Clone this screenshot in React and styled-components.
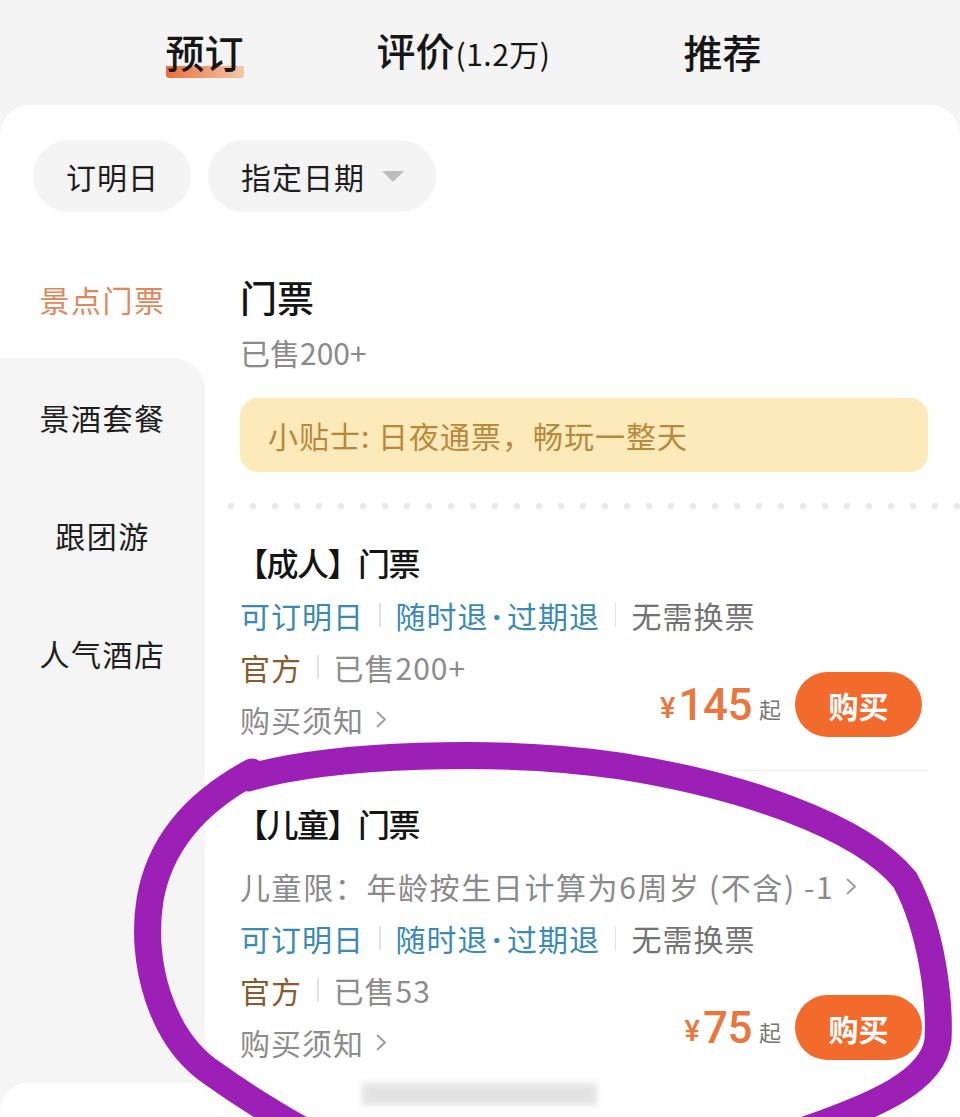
import React from 'react';
import styled, { createGlobalStyle } from 'styled-components';

const GlobalStyle = createGlobalStyle`
  body {
    margin: 0;
    background: #f4f4f4;
    font-family: "Noto Sans CJK SC", "Noto Sans", sans-serif;
    color: #1c1c1c;
  }
`;

const tickets = [
  {
    name: '【成人】门票',
    sold: '已售200+',
    price: '145',
  },
  {
    name: '【儿童】门票',
    desc: '儿童限：年龄按生日计算为6周岁 (不含) -1',
    sold: '已售53',
    price: '75',
  },
];

// thin ">" used after links
function Chevron() {
  return (
    <ChevronSvg viewBox="0 0 11 17" width="11" height="17">
      <polyline points="1.5,1.5 9,8.5 1.5,15.5" />
    </ChevronSvg>
  );
}

function App() {
  return (
    <Screen>
      <GlobalStyle />
      <TabBar>
        <Tab $active>预订</Tab>
        <Tab>评价<small>(1.2万)</small></Tab>
        <Tab>推荐</Tab>
      </TabBar>

      <Card>
        <Chips>
          <Chip>订明日</Chip>
          <Chip>指定日期<Caret /></Chip>
        </Chips>

        <Body>
          <Sidebar>
            <SideItem $active>景点门票</SideItem>
            <SideItem $first>景酒套餐</SideItem>
            <SideItem>跟团游</SideItem>
            <SideItem>人气酒店</SideItem>
            <SideFill />
          </Sidebar>

          <Content>
            <SectionTitle>门票</SectionTitle>
            <SectionSold>已售200+</SectionSold>
            <Tip>小贴士: 日夜通票，畅玩一整天</Tip>
            <Dots />

            {tickets.map((t, i) => (
              <Ticket key={t.name} $last={i === tickets.length - 1}>
                <TicketName>{t.name}</TicketName>
                {t.desc && (
                  <Desc>
                    {t.desc}
                    <Chevron />
                  </Desc>
                )}
                <Row>
                  <Tag $tone="blue">可订明日</Tag>
                  <Sep />
                  <Tag $tone="blue">随时退<Dot>·</Dot>过期退</Tag>
                  <Sep />
                  <Tag>无需换票</Tag>
                </Row>
                <Bottom>
                  <div>
                    <Row>
                      <Tag $tone="brown">官方</Tag>
                      <Sep />
                      <Tag $tone="light">{t.sold}</Tag>
                    </Row>
                    <Row>
                      <Tag $tone="light">购买须知</Tag>
                      <Chevron />
                    </Row>
                  </div>
                  <Price>
                    <Yen>¥</Yen>
                    <Amount>{t.price}</Amount>
                    <From>起</From>
                    <BuyButton>购买</BuyButton>
                  </Price>
                </Bottom>
              </Ticket>
            ))}
          </Content>
        </Body>

        <FooterWrap>
          <Footer>
            <Blur />
          </Footer>
        </FooterWrap>
      </Card>

      {/* hand drawn marker circle over the child ticket */}
      <Marker viewBox="0 0 960 1117" width="960" height="1117">
        <path
          d="M 248 778 C 330 754, 500 748, 620 766 C 740 785, 860 825, 905 880 C 932 930, 940 1000, 938 1040 C 933 1080, 880 1105, 790 1135"
        />
        <path
          d="M 252 772 C 200 800, 160 840, 150 900 C 140 960, 160 1040, 215 1075 C 250 1100, 280 1118, 320 1140"
        />
      </Marker>
    </Screen>
  );
}

export default App;

const Screen = styled.div`
  position: relative;
  width: 960px;
  height: 1117px;
  overflow: hidden;
  background: #f4f4f4;
`;

const TabBar = styled.div`
  display: flex;
  justify-content: center;
  align-items: center;
  gap: 133px;
  height: 105px;
  padding-right: 33px;
  box-sizing: border-box;
`;

const Tab = styled.div`
  font-size: 39px;
  font-weight: 500;
  line-height: 46px;
  color: #161616;
  padding-bottom: 4px;
  background: ${p => p.$active
    ? 'linear-gradient(90deg, #e8713a, #f6c7ab) no-repeat'
    : 'none'};
  background-size: 100% 12px;
  background-position: 0 100%;
  border-radius: 3px;

  small {
    font-size: 30px;
    font-weight: 400;
    letter-spacing: 0.5px;
    margin-left: 1px;
  }
`;

const Card = styled.div`
  background: #fff;
  border-radius: 30px 30px 0 0;
`;

const Chips = styled.div`
  display: flex;
  gap: 17px;
  padding: 35px 0 0 33px;
`;

const Chip = styled.div`
  display: inline-flex;
  align-items: center;
  height: 72px;
  padding: 0 32px 0 33px;
  border-radius: 36px;
  background: #f4f4f4;
  font-size: 30px;
  letter-spacing: 1px;
  color: #1e1e1e;
`;

const Caret = styled.span`
  width: 0;
  height: 0;
  margin-left: 17px;
  border-left: 11px solid transparent;
  border-right: 11px solid transparent;
  border-top: 11px solid #bdbdbd;
`;

const Body = styled.div`
  display: flex;
  margin-top: 28px;
`;

const Sidebar = styled.div`
  width: 205px;
  display: flex;
  flex-direction: column;
`;

const SideItem = styled.div`
  height: 118px;
  display: flex;
  align-items: center;
  justify-content: center;
  font-size: 30px;
  letter-spacing: 1.5px;
  color: ${p => (p.$active ? '#e0875c' : '#1e1e1e')};
  background: ${p => (p.$active ? '#fff' : '#f5f5f5')};
  border-top-right-radius: ${p => (p.$first ? '32px' : '0')};
`;

const SideFill = styled.div`
  flex: 1;
  background: #f5f5f5;
`;

const Content = styled.div`
  flex: 1;
  padding: 30px 32px 0 35px;
`;

const SectionTitle = styled.div`
  font-size: 37px;
  font-weight: 500;
  line-height: 54px;
  color: #141414;
`;

const SectionSold = styled.div`
  font-size: 30px;
  line-height: 56px;
  color: #8a8a8a;
`;

const Tip = styled.div`
  margin-top: 18px;
  height: 74px;
  display: flex;
  align-items: center;
  padding-left: 28px;
  border-radius: 18px;
  background: #fdeabb;
  color: #b8893b;
  font-size: 30px;
  letter-spacing: 1px;
`;

const Dots = styled.div`
  height: 8px;
  margin: 30px -32px 0 -20px;
  background-image: radial-gradient(circle, #e9e9e9 3px, transparent 3.5px);
  background-size: 22px 8px;
  background-repeat: repeat-x;
`;

const Ticket = styled.div`
  padding: 25px 0 ${p => (p.$last ? '15px' : '25px')};
  border-bottom: ${p => (p.$last ? 'none' : '1px solid #efefef')};
`;

const TicketName = styled.div`
  font-size: 32px;
  font-weight: 500;
  line-height: 54px;
  letter-spacing: -1.5px;
  margin-left: -4px;
  color: #141414;
`;

const ChevronSvg = styled.svg`
  margin-left: 12px;
  flex-shrink: 0;

  polyline {
    fill: none;
    stroke: #9a9a9a;
    stroke-width: 1.8;
    stroke-linecap: round;
    stroke-linejoin: round;
  }
`;

const Desc = styled.div`
  display: flex;
  align-items: center;
  margin-top: 10px;
  height: 52px;
  font-size: 30px;
  letter-spacing: 1.6px;
  color: #8a8a8a;
  white-space: nowrap;
`;

const Row = styled.div`
  display: flex;
  align-items: center;
  height: 52px;
  white-space: nowrap;
`;

const toneColor = {
  blue: '#3a8ab6',
  brown: '#8a5a2f',
  light: '#8c8c8c',
};

const Tag = styled.span`
  font-size: 30px;
  letter-spacing: 1px;
  color: ${p => toneColor[p.$tone] || '#737373'};
`;

const Dot = styled.span`
  font-family: "Noto Sans", Roboto, sans-serif;
  font-weight: 700;
  margin: 0 5px 0 4px;
`;

const Sep = styled.span`
  width: 1.5px;
  height: 24px;
  margin: 0 15px;
  background: #e3e3e3;
`;

const Bottom = styled.div`
  display: flex;
  justify-content: space-between;
  align-items: flex-end;
`;

const Price = styled.div`
  display: flex;
  align-items: center;
  margin: 0 6px 8px 0;
`;

const Yen = styled.span`
  font-family: Roboto, "Liberation Sans", sans-serif;
  font-size: 29px;
  font-weight: 500;
  color: #e8773f;
  margin: 6px 3px 0 0;
`;

const Amount = styled.span`
  font-family: Roboto, "Liberation Sans", sans-serif;
  font-size: 44px;
  font-weight: 500;
  color: #e8773f;
  letter-spacing: -0.5px;
`;

const From = styled.span`
  font-size: 22px;
  color: #777;
  margin: 6px 14px 0 7px;
`;

const BuyButton = styled.button`
  width: 127px;
  height: 65px;
  border: none;
  border-radius: 33px;
  background: #f36b2c;
  color: #fff;
  font-family: "Noto Sans CJK SC", sans-serif;
  font-size: 30px;
  font-weight: 700;
  padding: 0;
`;

const FooterWrap = styled.div`
  background: #f5f5f5;
`;

const Footer = styled.div`
  height: 35px;
  background: #fff;
  border-top-left-radius: 28px;
  padding-left: 362px;
  box-sizing: border-box;
`;

const Blur = styled.div`
  width: 235px;
  height: 22px;
  background: #dcdcdc;
  filter: blur(3px);
  opacity: 0.8;
`;

const Marker = styled.svg`
  position: absolute;
  top: 0;
  left: 0;
  pointer-events: none;

  path {
    fill: none;
    stroke: #9c20b6;
    stroke-width: 27;
    stroke-linecap: round;
    stroke-linejoin: round;
  }
`;
